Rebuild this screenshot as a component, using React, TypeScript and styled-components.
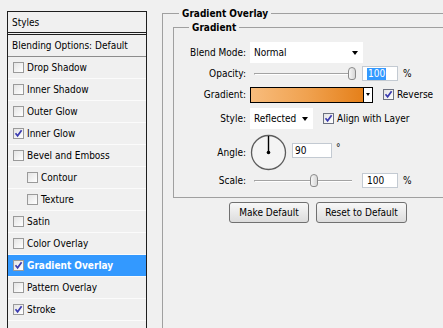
import React from "react";
import styled, { createGlobalStyle } from "styled-components";

const GlobalStyle = createGlobalStyle`
  html, body {
    margin: 0;
    padding: 0;
    background: #f0f0f0;
    overflow: hidden;
  }
  body {
    font-family: "DejaVu Sans Condensed", "Liberation Sans", sans-serif;
    font-size: 10px;
    color: #000;
  }
`;

type Effect = { name: string; checked?: boolean; indent?: boolean; active?: boolean };

const effects: Effect[] = [
  { name: "Drop Shadow" },
  { name: "Inner Shadow" },
  { name: "Outer Glow" },
  { name: "Inner Glow", checked: true },
  { name: "Bevel and Emboss" },
  { name: "Contour", indent: true },
  { name: "Texture", indent: true },
  { name: "Satin" },
  { name: "Color Overlay" },
  { name: "Gradient Overlay", checked: true, active: true },
  { name: "Pattern Overlay" },
  { name: "Stroke", checked: true },
];

function Check({ checked, $dark }: { checked?: boolean; $dark?: boolean }) {
  return (
    <CheckBox $dark={$dark}>
      {checked && (
        <svg width="9" height="9" viewBox="0 0 9 9">
          <path d="M1.5 4.2 L3.6 6.8 L7.6 1.2" fill="none" stroke="#3b3bb0" strokeWidth="1.7" />
        </svg>
      )}
    </CheckBox>
  );
}

function Slider({ fraction }: { fraction: number }) {
  return (
    <SliderBox>
      <Track>
        <Thumb style={{ left: `${fraction * 100}%` }} />
      </Track>
    </SliderBox>
  );
}

function Dial() {
  return (
    <svg width="37" height="37" viewBox="0 0 37 37">
      <circle cx="18.5" cy="18.5" r="17" fill="#f4f4f4" stroke="#5c5c5c" strokeWidth="1.3" />
      <line x1="18.5" y1="18.5" x2="18.5" y2="2" stroke="#000" strokeWidth="1.4" />
      <circle cx="18.5" cy="18.5" r="1.8" fill="#000" />
    </svg>
  );
}

export default function App() {
  return (
    <Window>
      <GlobalStyle />
      <StylesPanel>
        <PanelHeader>Styles</PanelHeader>
        <BlendingRow>Blending Options: Default</BlendingRow>
        {effects.map((e) => (
          <EffectRow key={e.name} $indent={e.indent} $active={e.active}>
            <Check checked={e.checked} />
            <span>{e.name}</span>
          </EffectRow>
        ))}
        <EffectRow />
      </StylesPanel>

      <Settings>
        <GroupBox $outer>
          <GroupTitle $offset={6}>Gradient Overlay</GroupTitle>
          <GroupBox>
            <GroupTitle $offset={15}>Gradient</GroupTitle>
            <FieldRow $h={21}>
              <FieldLabel>Blend Mode:</FieldLabel>
              <Select $w={113}>
                <span>Normal</span>
                <Arrow />
              </Select>
            </FieldRow>
            <FieldRow $h={21}>
              <FieldLabel>Opacity:</FieldLabel>
              <Slider fraction={1} />
              <NumberField $w={36}>
                <Selected>100</Selected>
              </NumberField>
              <Unit>%</Unit>
            </FieldRow>
            <FieldRow $h={21}>
              <FieldLabel>Gradient:</FieldLabel>
              <GradientPicker>
                <Swatch />
                <SwatchButton>
                  <Arrow $small />
                </SwatchButton>
              </GradientPicker>
              <CheckLabel>
                <Check checked $dark />
                Reverse
              </CheckLabel>
            </FieldRow>
            <FieldRow $h={27}>
              <FieldLabel>Style:</FieldLabel>
              <Select $w={63}>
                <span>Reflected</span>
                <Arrow />
              </Select>
              <CheckLabel>
                <Check checked $dark />
                Align with Layer
              </CheckLabel>
            </FieldRow>
            <FieldRow $h={41}>
              <FieldLabel>Angle:</FieldLabel>
              <Dial />
              <AngleField $w={40}>90</AngleField>
              <Degree>°</Degree>
            </FieldRow>
            <FieldRow $h={15}>
              <FieldLabel>Scale:</FieldLabel>
              <Slider fraction={0.61} />
              <NumberField $w={36}>100</NumberField>
              <Unit>%</Unit>
            </FieldRow>
          </GroupBox>
          <ButtonRow>
            <Button $w={80}>Make Default</Button>
            <Button $w={91}>Reset to Default</Button>
          </ButtonRow>
        </GroupBox>
      </Settings>
    </Window>
  );
}

const Window = styled.div`
  display: flex;
  width: 443px;
  height: 328px;
  overflow: hidden;
`;

const StylesPanel = styled.div`
  flex-shrink: 0;
  width: 140px;
  margin: 11px 0 0 7px;
  box-sizing: border-box;
  border: 1px solid #1e1e1e;
  border-bottom: none;
  background: #f0f0f0;
`;

const PanelHeader = styled.div`
  height: 20px;
  display: flex;
  align-items: center;
  padding-left: 4px;
  border-bottom: 3px double #1e1e1e;
`;

const BlendingRow = styled.div`
  height: 21px;
  display: flex;
  align-items: center;
  padding-left: 4px;
  border-bottom: 1px solid #8c8c8c;
`;

const EffectRow = styled.div<{ $indent?: boolean; $active?: boolean }>`
  height: 21px;
  display: flex;
  align-items: center;
  gap: 3px;
  padding-left: ${({ $indent }) => ($indent ? 19 : 5)}px;
  border-bottom: 1px solid #fbfbfb;
  background: ${({ $active }) => ($active ? "#3399ff" : "transparent")};
  color: ${({ $active }) => ($active ? "#fff" : "#000")};
  font-weight: ${({ $active }) => ($active ? "bold" : "normal")};
`;

const CheckBox = styled.span<{ $dark?: boolean }>`
  width: 11px;
  height: 11px;
  box-sizing: border-box;
  flex-shrink: 0;
  display: inline-flex;
  align-items: center;
  justify-content: center;
  border: 1px solid ${({ $dark }) => ($dark ? "#6d7280" : "#9a9a9a")};
  background: linear-gradient(135deg, #e4e4e4, #ffffff);
`;

const Settings = styled.div`
  flex: 1;
  min-width: 0;
  padding-left: 15px;
  overflow: hidden;
`;

const GroupBox = styled.fieldset<{ $outer?: boolean }>`
  margin: ${({ $outer }) => ($outer ? "7px 0 0 0" : "0")};
  padding: ${({ $outer }) => ($outer ? "1px 0 0 10px" : "8px 0 9px 0")};
  width: ${({ $outer }) => ($outer ? "320px" : "300px")};
  min-width: 0;
  box-sizing: border-box;
  border: 1px solid #a0a0a0;
  ${({ $outer }) => ($outer ? "height: 340px;" : "")}
`;

const GroupTitle = styled.legend<{ $offset: number }>`
  margin-left: ${({ $offset }) => $offset}px;
  padding: 0 3px;
  font-weight: bold;
  line-height: 13px;
`;

const FieldRow = styled.div<{ $h: number }>`
  height: ${({ $h }) => $h}px;
  display: flex;
  align-items: center;
`;

const FieldLabel = styled.span`
  width: 72px;
  margin-right: 4px;
  text-align: right;
  flex-shrink: 0;
`;

const Select = styled.div<{ $w: number }>`
  width: ${({ $w }) => $w}px;
  height: 21px;
  box-sizing: border-box;
  padding: 0 5px 0 4px;
  display: flex;
  align-items: center;
  justify-content: space-between;
  background: #fff;
`;

const Arrow = styled.span<{ $small?: boolean }>`
  width: 0;
  height: 0;
  border-left: ${({ $small }) => ($small ? 2.5 : 3.5)}px solid transparent;
  border-right: ${({ $small }) => ($small ? 2.5 : 3.5)}px solid transparent;
  border-top: ${({ $small }) => ($small ? 3 : 4)}px solid #000;
`;

const SliderBox = styled.div`
  width: 108px;
  height: 15px;
  display: flex;
  align-items: center;
  padding: 0 6px 0 4px;
  box-sizing: border-box;
`;

const Track = styled.div`
  position: relative;
  flex: 1;
  height: 1px;
  background: #a3a3a3;
  border-bottom: 1px solid #fff;
  border-left: 1px solid #a3a3a3;
`;

const Thumb = styled.span`
  position: absolute;
  top: -6px;
  width: 8px;
  height: 13px;
  margin-left: -4px;
  box-sizing: border-box;
  border: 1px solid #8a8a8a;
  border-radius: 4px 4px 3px 3px;
  background: linear-gradient(90deg, #f7f7f7, #d6d6d6);
`;

const NumberField = styled.div<{ $w: number }>`
  width: ${({ $w }) => $w}px;
  height: 15px;
  margin-left: 4px;
  box-sizing: border-box;
  padding-left: 4px;
  display: flex;
  align-items: center;
  background: #fff;
  border: 1px solid #c3cad2;
`;

const AngleField = styled(NumberField)`
  margin-left: 5px;
  margin-top: -4px;
  padding-left: 2px;
`;

const Selected = styled.span`
  background: #3399ff;
  color: #fff;
  padding: 0 1px;
  line-height: 12px;
`;

const Unit = styled.span`
  margin-left: 5px;
`;

const Degree = styled.span`
  margin-left: 4px;
  margin-top: -10px;
`;

const GradientPicker = styled.div`
  display: flex;
  height: 16px;
`;

const Swatch = styled.div`
  width: 114px;
  box-sizing: border-box;
  border: 1px solid #000;
  background: linear-gradient(90deg, #f8bc7c, #f0a250 50%, #e5801a);
`;

const SwatchButton = styled.div`
  width: 9px;
  box-sizing: border-box;
  border: 1px solid #000;
  border-left: none;
  background: #fff;
  display: flex;
  align-items: center;
  justify-content: center;
`;

const CheckLabel = styled.label`
  display: flex;
  align-items: center;
  gap: 3px;
  margin-left: 10px;
`;

const ButtonRow = styled.div`
  display: flex;
  gap: 7px;
  margin-top: 4px;
  padding-left: 56px;
`;

const Button = styled.button<{ $w: number }>`
  width: ${({ $w }) => $w}px;
  height: 21px;
  padding: 0;
  font: inherit;
  color: #000;
  border: 1px solid #707070;
  border-radius: 3px;
  background: linear-gradient(#f8f8f8, #dcdcdc);
`;
